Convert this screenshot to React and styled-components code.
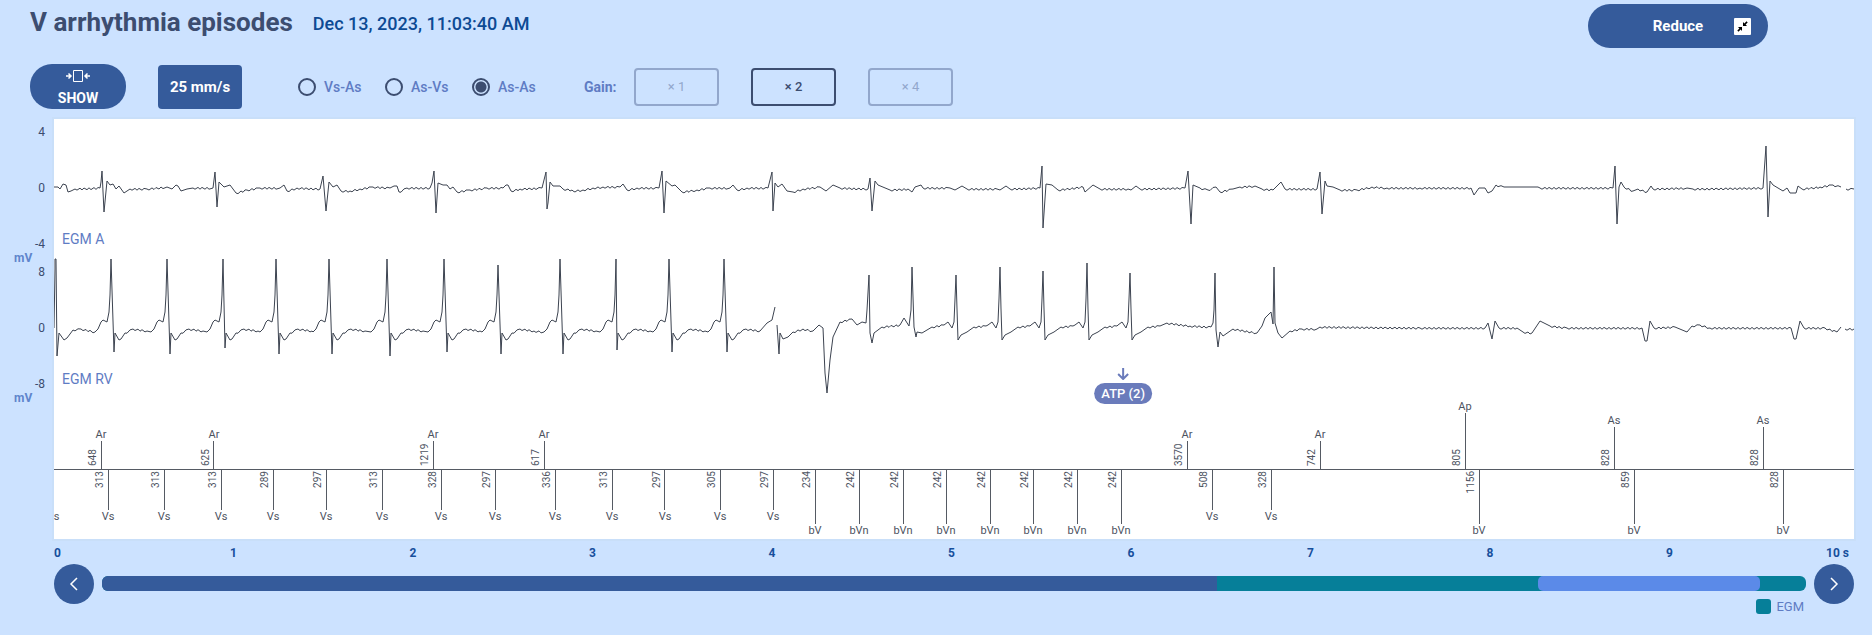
import React, { useState } from 'react';
import styled, { createGlobalStyle, css } from 'styled-components';

const GlobalStyle = createGlobalStyle`
	* {
		box-sizing: border-box;
	}

	body {
		background: #cce2ff;
		color: #3c4d70;
		font-family: Roboto, "Open Sans", sans-serif;
		margin: 0;
	}

	button, input {
		font: inherit;
		margin: 0;
	}
`;

const Page = styled.main`
	padding: 4px 18px 16px 0;
`;

const Header = styled.header`
	align-items: center;
	display: flex;
	gap: 20px;
	height: 44px;
	padding: 0 86px 0 30px;
`;

const Title = styled.h1`
	font-size: 26px;
	font-weight: 700;
	line-height: 32px;
	margin: 0;
	padding-bottom: 8px;
`;

const EpisodeDate = styled.time`
	color: #0d4a94;
	flex: 1;
	font-size: 18px;
	font-weight: 500;
	line-height: 24px;
	padding-bottom: 4px;
`;

const ReduceButton = styled.button`
	align-items: center;
	background: #355b9b;
	border: 0;
	border-radius: 22px;
	color: white;
	display: grid;
	font-size: 15px;
	font-weight: 700;
	grid-template-columns: 1fr 54px 1fr;
	height: 44px;
	padding: 0 17px;
	width: 180px;

	svg {
		justify-self: end;
	}
`;

const Toolbar = styled.div`
	align-items: center;
	display: flex;
	height: 45px;
	margin: 16px 0 10px;
	padding-left: 30px;
`;

const ShowButton = styled.button`
	align-items: center;
	background: #355b9b;
	border: 0;
	border-radius: 22px;
	color: white;
	display: flex;
	flex-direction: column;
	font-size: 14px;
	font-weight: 700;
	gap: 8px;
	height: 45px;
	line-height: 16px;
	margin-right: 32px;
	padding: 6px 0 0;
	width: 96px;
`;

const SpeedButton = styled.button`
	background: #355b9b;
	border: 0;
	border-radius: 4px;
	color: white;
	font-size: 15px;
	font-weight: 700;
	height: 44px;
	padding: 0;
	width: 84px;
`;

const Radios = styled.div`
	display: flex;
	gap: 24px;
	margin: 0 49px 0 56px;
`;

const RadioLabel = styled.label`
	align-items: center;
	color: #5f7cc4;
	display: flex;
	font-size: 14px;
	font-weight: 500;
	gap: 8px;
	width: 63px;
	white-space: nowrap;
`;

const Radio = styled.input`
	appearance: none;
	border: 2px solid #3c4d70;
	border-radius: 50%;
	flex: none;
	height: 18px;
	width: 18px;

	&:checked {
		background: radial-gradient(circle, #3c4d70 5px, transparent 6px);
	}
`;

const GainLabel = styled.span`
	color: #5f7cc4;
	font-size: 14px;
	font-weight: 700;
	width: 50px;
`;

const Gains = styled.div`
	display: flex;
	gap: 32px;
`;

const GainButton = styled.button`
	background: transparent;
	border: 2px solid #92a7cc;
	border-radius: 4px;
	color: #92a7cc;
	font-size: 13px;
	height: 38px;
	padding: 0;
	width: 85px;

	${({ $active }) => $active && css`
		border-color: #3c4d70;
		color: #3c4d70;
		font-weight: 500;
	`}
`;

const Recording = styled.section`
	display: grid;
	grid-template-columns: 54px 1fr;
`;

const Scale = styled.div`
	padding-top: 6px;
`;

const Ticks = styled.div`
	display: grid;
	font-size: 12px;
	line-height: 14px;
	padding-right: 9px;
	row-gap: 42px;
	text-align: right;
`;

const Unit = styled.div`
	color: #5f85cc;
	font-size: 12px;
	font-weight: 700;
	line-height: 14px;
	padding-left: 14px;
`;

const Panel = styled.div`
	background: white;
	box-shadow: 0 0 0 2px #c9dff9;
	height: 420px;
	overflow: hidden;
	position: relative;
`;

const Chart = styled.svg`
	display: block;
	height: 100%;
	width: 100%;
`;

const Wave = styled.path`
	fill: none;
	stroke: #3c4350;
	stroke-linejoin: round;
	vector-effect: non-scaling-stroke;
`;

const MarkerLine = styled.line`
	shape-rendering: crispEdges;
	stroke: #555a63;
`;

const MarkerText = styled.text`
	fill: #4d535f;
	font-size: ${({ $interval }) => $interval ? 10 : 11}px;
`;

const ChannelName = styled.text`
	fill: #5f7cc4;
	font-size: 14px;
`;

const Therapy = styled.div`
	align-items: center;
	display: flex;
	flex-direction: column;
	gap: 3px;
	left: 59.4%;
	position: absolute;
	top: 249px;
	transform: translateX(-50%);
`;

const TherapyBadge = styled.span`
	background: #6a7bbb;
	border-radius: 11px;
	color: white;
	font-size: 13px;
	font-weight: 500;
	line-height: 21px;
	padding: 0 7px;
`;

const TimeAxis = styled.div`
	color: #174f9c;
	display: flex;
	font-size: 12px;
	font-weight: 700;
	grid-column: 2;
	height: 25px;
	line-height: 28px;
	padding-right: 5px;
`;

const Second = styled.span`
	flex: ${({ $edge }) => $edge ? 1 : 2} 1 0;
	text-align: ${({ $edge }) => $edge || 'center'};
`;

const Navigator = styled.div`
	align-items: flex-start;
	display: flex;
	gap: 8px;
	grid-column: 2;
`;

const NavButton = styled.button`
	background: #355b9b;
	border: 0;
	border-radius: 50%;
	color: white;
	display: grid;
	height: 40px;
	padding: 0;
	place-items: center;
	width: 40px;
`;

const Overview = styled.div`
	flex: 1;
	padding-top: 12px;
`;

const Track = styled.div`
	background: #067f99;
	border-radius: 6px;
	display: flex;
	height: 15px;
	overflow: hidden;
`;

const Segment = styled.div`
	background: ${({ $color }) => $color || 'transparent'};
	border-radius: ${({ $thumb }) => $thumb ? 5 : 0}px;
	flex: ${({ $size }) => $size} 1 0;
`;

const Legend = styled.div`
	align-items: center;
	color: #5f7cc4;
	display: flex;
	font-size: 13px;
	gap: 5px;
	justify-content: flex-end;
	line-height: 15px;
	margin-top: 8px;
	padding-right: 2px;
`;

const Swatch = styled.i`
	background: #067f99;
	border-radius: 3px;
	height: 15px;
	width: 15px;
`;

// samples are "x,y" pairs on a 1800 x 420 strip
const CHANNEL_A = [
	`0,68 4,68 6,70 9,65 12,66 14,73 17,72 21,70 46,69 47,63 48,52 50,93 53,62 56,66 59,65 62,70 65,67 70,74 76,70
	93,70 113,68 118,70 122,66 124,67 127,72 133,70 139,69 159,69 161,53 163,88 165,63 170,68 176,66 182,74 193,71
	206,69 226,69 230,66 233,72 243,69 266,70 269,57 272,92 275,63 279,68 283,66 287,72 296,72 306,70 319,68 336,69
	340,67 343,67 345,73 353,69 376,69 378,64 380,52 382,94 384,64 389,66 393,66 396,70 399,68 403,73 416,71 433,69
	449,69 452,66 454,66 457,72 466,70 488,69 492,53 493,90 494,84 496,63 499,67 506,67 509,70 518,71 519,72 529,71
	539,69 549,68 566,68 569,65 573,71 583,69 605,69 608,52 610,94 612,62 618,67 621,66 628,73 643,71 656,69 676,69
	679,66 683,71 693,69 714,69 718,53 719,92 721,64 724,68 728,65 733,72 739,73 749,70 766,68 772,72 779,66 786,69
	814,70 816,59 818,92 821,62 824,66 836,71 854,70 858,73 861,68 867,66 869,69 896,69 901,71 908,67 913,70 943,70
	946,71 952,67 956,70 986,69 988,47 989,109 992,65 998,66 1004,71 1029,68 1031,73 1039,66 1046,70 1074,70 1077,71
	1082,67 1086,70 1131,69 1134,52 1137,105 1139,66 1146,69 1154,71 1162,68 1166,73 1179,70 1186,68 1201,67 1208,70
	1219,71 1224,66 1227,63 1231,70 1263,70 1266,53 1268,95 1271,62 1273,67 1279,68 1286,71 1303,71 1318,68 1333,69
	1366,69 1417,69 1420,76 1425,69 1431,69 1434,74 1438,72 1442,66 1450,68`,
	`1450,68 1484,68 1486,69 1559,69 1561,47 1563,105 1565,68
	1567,63 1570,68 1579,72 1584,70 1593,73 1597,67 1599,70 1633,69 1639,70 1709,69 1712,27 1714,98 1716,62 1719,66
	1729,72 1733,69 1736,74 1742,74 1744,67 1748,70 1766,68 1779,66 1787,68`,
	'1792,70 1800,70',
];

// [peak x, peak y, trough x, trough y]
const FAST_BEATS = [
	[57, 140, 60, 233], [113, 140, 116, 235], [169, 140, 171, 229], [222, 140, 225, 235], [275, 140, 278, 235],
	[333, 140, 336, 237], [390, 140, 393, 233], [444, 146, 447, 235], [506, 140, 509, 235], [562, 140, 563, 231],
	[615, 140, 618, 233], [670, 140, 673, 233],
];

const fastBeat = ([x, top, tx, bottom]) =>
	`${x - 16},213 ${x - 13},210 ${x - 10},203 ${x - 8},201 ${x - 4},203 ${x - 2},193 ${x - 1},176 ${x},${top}
	${tx},${bottom} ${tx + 1},214 ${tx + 5},221 ${tx + 7},220 ${tx + 11},214 ${tx + 19},210 ${tx + 33},212`;

const PACED_BEATS = [[902, 156], [946, 148], [989, 152], [1033, 144], [1076, 154]];

const pacedBeat = ([x, top]) =>
	`${x - 12},206 ${x - 8},203 ${x - 4},209 ${x - 2},203 ${x - 1},180 ${x},${top} ${x + 1},190 ${x + 2},221
	${x + 5},216 ${x + 11},213 ${x + 18},208 ${x + 30},207`;

const CHANNEL_RV = [
	`0,209 1,150 1,140 2,140 3,237 5,214 10,221 13,219 19,211 27,210 ${FAST_BEATS.map(fastBeat).join(' ')}
	713,204 718,201 721,188`,
	`723,206 725,235 726,214 729,220 734,218 739,213 749,210 759,212 765,206 769,209 771,254 773,274 776,241 779,218
	786,203 798,200 803,206 808,203 812,204 813,191 815,156 816,214 818,224 820,214 828,208 846,206 850,199 855,207
	857,191 858,148 860,208 862,218 863,213 868,214 878,208 ${PACED_BEATS.map(pacedBeat).join(' ')}
	1113,204 1136,207 1157,208 1159,204 1160,191 1161,154 1162,211 1164,228 1166,213 1169,217 1179,210 1203,214
	1208,207 1211,199 1217,193 1219,205 1220,148 1221,204 1224,214 1228,219 1236,212 1248,210 1263,210 1266,208
	1366,209 1431,209 1434,204 1435,208 1438,220 1441,202 1445,209 1463,209 1469,213 1478,214 1486,202 1496,207
	1513,209 1588,209 1591,222 1593,222 1596,202 1600,209 1621,208 1633,213 1638,207 1646,206 1656,209 1737,209
	1740,220 1742,220 1746,202 1750,209 1771,209 1783,213 1787,208`,
	'1791,210 1800,210',
];

// [x, label, interval, line length], negative lengths point up
const MARKERS = [
	[47, 'Ar', 648, -28], [160, 'Ar', 625, -28], [379, 'Ar', 1219, -28], [490, 'Ar', 617, -28],
	[1133, 'Ar', 3570, -28], [1266, 'Ar', 742, -28], [1411, 'Ap', 805, -56], [1560, 'As', 828, -42],
	[1709, 'As', 828, -42],
	[-1, 'Vs', null, 41], [54, 'Vs', 313, 41], [110, 'Vs', 313, 41], [167, 'Vs', 313, 41], [219, 'Vs', 289, 41],
	[272, 'Vs', 297, 41], [328, 'Vs', 313, 41], [387, 'Vs', 328, 41], [441, 'Vs', 297, 41], [501, 'Vs', 336, 41],
	[558, 'Vs', 313, 41], [611, 'Vs', 297, 41], [666, 'Vs', 305, 41], [719, 'Vs', 297, 41],
	[761, 'bV', 234, 55], [805, 'bVn', 242, 55], [849, 'bVn', 242, 55], [892, 'bVn', 242, 55],
	[936, 'bVn', 242, 55], [979, 'bVn', 242, 55], [1023, 'bVn', 242, 55], [1067, 'bVn', 242, 55],
	[1158, 'Vs', 508, 41], [1217, 'Vs', 328, 41], [1425, 'bV', 1156, 55], [1580, 'bV', 859, 55],
	[1729, 'bV', 828, 55],
];

// Long flat stretches get the small ripple of the sensing noise
const toPath = samples => {
	const points = samples.trim().split(/\s+/).map(p => p.split(',').map(Number));
	let d = `M${points[0]}`;

	for (let i = 1; i < points.length; i++) {
		const [x0, y0] = points[i - 1];
		const [x1, y1] = points[i];

		if (x1 - x0 >= 8 && Math.abs(y1 - y0) <= 4 && x0 !== 1450) {
			for (let x = x0 + 2, n = 0; x < x1 - 1; x += n % 3 ? 2 : 3, n++) {
				const y = y0 + (y1 - y0) * (x - x0) / (x1 - x0);
				d += `L${x},${(y + (n % 2 ? -0.6 : 1.2)).toFixed(1)}`;
			}
		}

		d += `L${x1},${y1}`;
	}

	return d;
};

const Marker = ({ x, label, interval, length }) => {
	const up = length < 0;

	return (
		<svg x={`${x / 18}%`} y="350" overflow="visible">
			{ interval && <MarkerLine x1="0" y1="0" x2="0" y2={length} /> }
			<MarkerText y={up ? length - 3 : length + 10} textAnchor="middle">{label}</MarkerText>
			{
				interval &&
				<MarkerText $interval transform={`translate(-5 ${up ? -3 : 2}) rotate(-90)`} textAnchor={up ? 'start' : 'end'}>
					{interval}
				</MarkerText>
			}
		</svg>
	);
};

const ReduceIcon = () => (
	<svg width="17" height="17" viewBox="0 0 17 17" aria-hidden="true">
		<rect width="17" height="17" rx="1" fill="white" />
		<path d="M9 4v4h4L11.6 6.6 13.7 4.5 12.5 3.3 10.4 5.4zM8 13V9H4l1.4 1.4-2.1 2.1 1.2 1.2 2.1-2.1z" fill="black" />
	</svg>
);

const ShowIcon = () => (
	<svg width="24" height="12" viewBox="0 0 24 12" fill="none" stroke="white" aria-hidden="true">
		<path d="M7.5 .5h9v11h-9z" />
		<path d="M0 6h5M2.5 3.5 5 6 2.5 8.5M24 6h-5M21.5 3.5 19 6l2.5 2.5" strokeWidth="1.5" />
	</svg>
);

const Chevron = ({ d }) => (
	<svg width="16" height="16" viewBox="0 0 16 16" fill="none" stroke="currentColor" strokeWidth="1.5" aria-hidden="true">
		<path d={d} />
	</svg>
);

const App = () => {
	const [interval, setInterval] = useState('As-As');
	const [gain, setGain] = useState(2);

	return (
		<>
			<GlobalStyle />
			<Page>
				<Header>
					<Title>V arrhythmia episodes</Title>
					<EpisodeDate dateTime="2023-12-13T11:03:40">Dec 13, 2023, 11:03:40 AM</EpisodeDate>
					<ReduceButton><span /><span>Reduce</span><ReduceIcon /></ReduceButton>
				</Header>
				<Toolbar>
					<ShowButton><ShowIcon />SHOW</ShowButton>
					<SpeedButton>25 mm/s</SpeedButton>
					<Radios>
						{ ['Vs-As', 'As-Vs', 'As-As'].map(name => (
							<RadioLabel key={name}>
								<Radio
									type="radio"
									name="interval"
									checked={interval === name}
									onChange={() => setInterval(name)}
								/>
								{name}
							</RadioLabel>
						)) }
					</Radios>
					<GainLabel id="gain">Gain:</GainLabel>
					<Gains role="group" aria-labelledby="gain">
						{ [1, 2, 4].map(n => (
							<GainButton key={n} $active={gain === n} onClick={() => setGain(n)}>× {n}</GainButton>
						)) }
					</Gains>
				</Toolbar>
				<Recording>
					<Scale>
						<Ticks><span>4</span><span>0</span><span>-4</span></Ticks>
						<Unit>mV</Unit>
						<Ticks><span>8</span><span>0</span><span>-8</span></Ticks>
						<Unit>mV</Unit>
					</Scale>
					<Panel>
						<Chart>
							<svg width="100%" height="420" viewBox="0 0 1800 420" preserveAspectRatio="none">
								{ [...CHANNEL_A, ...CHANNEL_RV].map((samples, i) => <Wave key={i} d={toPath(samples)} />) }
							</svg>
							<ChannelName x="8" y="125">EGM A</ChannelName>
							<ChannelName x="8" y="265">EGM RV</ChannelName>
							<MarkerLine x1="0" y1="350" x2="100%" y2="350" />
							{ MARKERS.map(([x, label, ms, length]) => (
								<Marker key={`${label}${x}`} x={x} label={label} interval={ms} length={length} />
							)) }
						</Chart>
						<Therapy>
							<svg width="12" height="12" viewBox="0 0 12 12" fill="none" stroke="#6a7bbb" strokeWidth="2" aria-hidden="true">
								<path d="M6 0v11M1 6l5 5 5-5" />
							</svg>
							<TherapyBadge>ATP (2)</TherapyBadge>
						</Therapy>
					</Panel>
					<TimeAxis>
						<Second $edge="left">0</Second>
						{ [1, 2, 3, 4, 5, 6, 7, 8, 9].map(s => <Second key={s}>{s}</Second>) }
						<Second $edge="right">10 s</Second>
					</TimeAxis>
					<Navigator>
						<NavButton aria-label="Previous"><Chevron d="M11 2 5 8l6 6" /></NavButton>
						<Overview>
							<Track>
								<Segment $size={1115} $color="#355b9b" />
								<Segment $size={321} />
								<Segment $size={222} $color="#5b8ae8" $thumb />
								<Segment $size={46} />
							</Track>
							<Legend><Swatch />EGM</Legend>
						</Overview>
						<NavButton aria-label="Next"><Chevron d="m5 2 6 6-6 6" /></NavButton>
					</Navigator>
				</Recording>
			</Page>
		</>
	);
};

export default App;
